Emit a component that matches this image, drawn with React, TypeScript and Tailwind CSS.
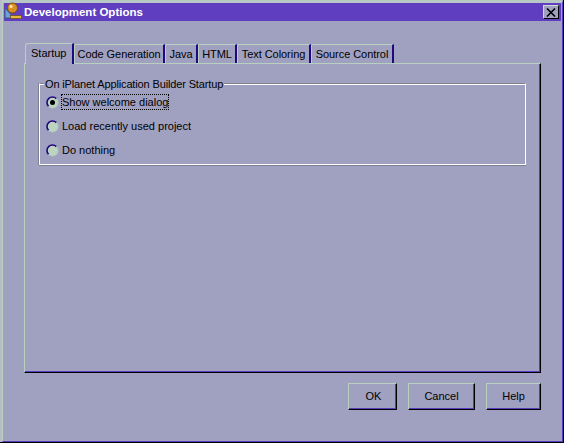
const tabs = [
  { label: "Code Generation", width: "w-[91px]" },
  { label: "Java", width: "w-[33px]" },
  { label: "HTML", width: "w-[39px]" },
  { label: "Text Coloring", width: "w-[74px]" },
  { label: "Source Control", width: "w-[83px]" },
];

const options = ["Show welcome dialog", "Load recently used project", "Do nothing"];

function Radio({ checked }: { checked?: boolean }) {
  return (
    <svg width="13" height="13" viewBox="0 0 13 13" className="shrink-0">
      <circle cx="6.5" cy="6.5" r="5.5" fill="#bcd4c0" />
      <path d="M2.6 10.4A5.5 5.5 0 0 1 10.4 2.6" fill="none" stroke="#200880" strokeWidth="1.6" />
      <path d="M2.6 10.4A5.5 5.5 0 0 0 10.4 2.6" fill="none" stroke="#b4c8bc" strokeWidth="1.2" />
      {checked && <circle cx="6.5" cy="6.5" r="2.5" fill="#000" />}
    </svg>
  );
}

function Globe() {
  return (
    <svg width="19" height="18" viewBox="0 0 19 18" className="shrink-0 -mt-[3px]">
      <path d="M1 6v10h9z" fill="#70a0d8" stroke="#3a5a90" strokeWidth="1" />
      <circle cx="8.5" cy="6" r="5" fill="#d89020" stroke="#805010" strokeWidth="1" />
      <circle cx="7" cy="4.5" r="1.7" fill="#f8e0a0" />
      <rect x="6.5" y="13.5" width="11" height="3" fill="#e8b838" stroke="#604010" strokeWidth="0.6" />
    </svg>
  );
}

function DialogButton({ label, width }: { label: string; width: string }) {
  return (
    <button
      className={`${width} h-[27px] border-t border-l border-r border-b border-t-[#b8d0c0] border-l-[#b8d0c0] border-r-black border-b-black text-[11px] text-black shadow-[inset_-1px_-1px_0_#5a3cc0]`}
    >
      {label}
    </button>
  );
}

export default function App() {
  return (
    <div className="w-[564px] h-[443px] border-r border-b border-r-black border-b-black bg-[#b8bcc8] pl-[2px]">
      <div className="w-full h-full bg-[#a0a0c0] font-['Liberation_Sans',Arial,sans-serif] text-[11px] text-black border-l border-t-[3px] border-l-[#b8d0c0] border-t-[#b8c8c4] border-r border-b border-r-[#5a3cc0] border-b-[#5a3cc0] flex flex-col">
        <div className="h-[18px] ml-px mr-px bg-[#5f3fc0] flex items-center shrink-0 pr-[2px]">
          <Globe />
          <span className="ml-px mt-px text-[11.5px] font-bold text-white">Development Options</span>
          <div className="ml-auto w-[16px] h-[14px] bg-[#a0a0c0] border-t border-l border-t-[#d0d8d8] border-l-[#d0d8d8] border-r border-b border-r-black border-b-black flex items-center justify-center">
            <svg width="10" height="9" viewBox="0 0 10 9">
              <path d="M1 0.5l8 8M9 0.5l-8 8" stroke="#000" strokeWidth="1.6" />
            </svg>
          </div>
        </div>

        <div className="flex-1 flex flex-col pl-[21px] pt-[21px]">
          <div className="flex h-[21px] items-end relative z-10">
            <div className="w-[49px] h-[21px] -mb-px ml-px border-t border-l border-r-2 border-t-[#b8d0c0] border-l-[#b8d0c0] border-r-[#200880] rounded-tl-[3px] bg-[#a0a0c0] pl-[5px] pt-[2px] leading-[14px]">
              Startup
            </div>
            {tabs.map((tab) => (
              <div
                key={tab.label}
                className={`${tab.width} h-[19px] border-t border-l border-r-2 border-t-[#b8d0c0] border-l-[#b8d0c0] border-r-[#200880] rounded-tl-[2px] flex items-center justify-center leading-[14px] tracking-[-0.05px]`}
              >
                {tab.label}
              </div>
            ))}
          </div>

          <div className="w-[517px] h-[310px] border-t border-l border-t-[#b8d0c0] border-l-[#b8d0c0] border-r border-b border-r-black border-b-black shadow-[inset_-1px_-1px_0_#5a3cc0] pl-[14px] pt-[19px] shrink-0">
            <div className="relative h-[82px] w-[487px] border-t border-t-[#808090] border-l border-l-white border-r border-b border-r-white border-b-white shadow-[inset_0_1px_0_#fff,0_1px_0_#808090,-1px_0_0_#808090] pl-[6px] pt-[11px]">
              <span className="absolute left-[4px] -top-[7px] bg-[#a0a0c0] px-px leading-[14px] tracking-[-0.14px]">
                On iPlanet Application Builder Startup
              </span>
              <div className="flex flex-col gap-[10px]">
                {options.map((option, i) => (
                  <div key={option} className="flex items-center gap-[3px] h-[14px]">
                    <Radio checked={i === 0} />
                    <span
                      className={`leading-[14px] ${i === 0 ? "outline-1 outline-dotted outline-black" : ""}`}
                    >
                      {option}
                    </span>
                  </div>
                ))}
              </div>
            </div>
          </div>

          <div className="flex justify-end gap-[11px] mt-[10px] w-[517px]">
            <DialogButton label="OK" width="w-[49px] pl-[2px]" />
            <DialogButton label="Cancel" width="w-[67px]" />
            <DialogButton label="Help" width="w-[55px]" />
          </div>
        </div>
      </div>
    </div>
  );
}
